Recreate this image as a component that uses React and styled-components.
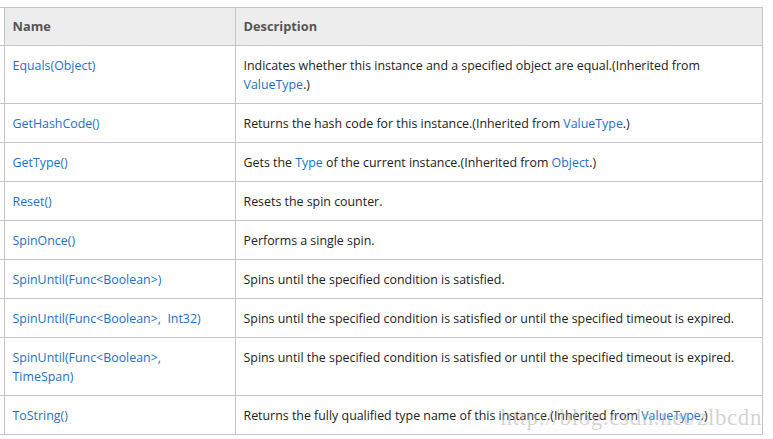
import React from "react";
import styled, { createGlobalStyle } from "styled-components";

const GlobalStyle = createGlobalStyle`
  body {
    margin: 0;
    background: #fff;
  }
`;

const rows = [
  {
    name: ["Equals(Object)"],
    desc: [
      ["Indicates whether this instance and a specified object are equal.(Inherited from"],
      [{ link: "ValueType" }, ".)"],
    ],
  },
  {
    name: ["GetHashCode()"],
    desc: [["Returns the hash code for this instance.(Inherited from ", { link: "ValueType" }, ".)"]],
  },
  {
    name: ["GetType()"],
    desc: [
      ["Gets the ", { link: "Type" }, " of the current instance.(Inherited from ", { link: "Object" }, ".)"],
    ],
  },
  { name: ["Reset()"], desc: [["Resets the spin counter."]] },
  { name: ["SpinOnce()"], desc: [["Performs a single spin."]] },
  {
    name: ["SpinUntil(Func<Boolean>)"],
    desc: [["Spins until the specified condition is satisfied."]],
  },
  {
    name: ["SpinUntil(Func<Boolean>,\u00a0 Int32)"],
    desc: [["Spins until the specified condition is satisfied or until the specified timeout is expired."]],
  },
  {
    name: ["SpinUntil(Func<Boolean>,", "TimeSpan)"],
    desc: [["Spins until the specified condition is satisfied or until the specified timeout is expired."]],
  },
  {
    name: ["ToString()"],
    desc: [
      ["Returns the fully qualified type name of this instance.(Inherited from ", { link: "ValueType" }, ".)"],
    ],
  },
];

export default function App() {
  return (
    <Page>
      <GlobalStyle />
      <Table>
        <colgroup>
          <col style={{ width: 4 }} />
          <col style={{ width: 231 }} />
          <col style={{ width: 527 }} />
        </colgroup>
        <thead>
          <tr>
            <Edge as="th" />
            <HeadCell>Name</HeadCell>
            <HeadCell>Description</HeadCell>
          </tr>
        </thead>
        <tbody>
          {rows.map((row, i) => (
            <tr key={i}>
              <Edge />
              <Cell>
                {row.name.map((line, j) => (
                  <Line key={j}>
                    <Link>{line}</Link>
                  </Line>
                ))}
              </Cell>
              <Cell>
                {row.desc.map((line, j) => (
                  <Line key={j}>
                    {line.map((part, k) =>
                      typeof part === "string" ? part : <Link key={k}>{part.link}</Link>
                    )}
                  </Line>
                ))}
              </Cell>
            </tr>
          ))}
        </tbody>
      </Table>
      <Watermark>http://blog.csdn.net/zlbcdn</Watermark>
    </Page>
  );
}

const Page = styled.div`
  position: relative;
  width: 773px;
  height: 439px;
  padding-top: 7px;
  box-sizing: border-box;
  overflow: hidden;
  font-family: "Open Sans", "Noto Sans", sans-serif;
  font-size: 12.4px;
`;

const Table = styled.table`
  border-collapse: collapse;
  table-layout: fixed;
  width: 762px;

  tr > * {
    border-top: 1px solid #c4c4c4;
    border-bottom: 1px solid #c4c4c4;
  }
`;

const Edge = styled.td`
  padding: 0;
  border-right: 1px solid #c4c4c4;
  background: #fff;
`;

const HeadCell = styled.th`
  background: #ededed;
  color: #555;
  font-weight: 700;
  font-size: 12.8px;
  text-align: left;
  padding: 9px 8px 9px;
  line-height: 19px;
  border-right: 1px solid #c4c4c4;
`;

const Cell = styled.td`
  vertical-align: top;
  color: #222;
  padding: 10px 8px 9px;
  line-height: 19px;
  border-right: 1px solid #c4c4c4;
`;

const Line = styled.div`
  white-space: nowrap;
`;

const Link = styled.span`
  color: #1e6fc8;
`;

const Watermark = styled.div`
  position: absolute;
  right: 11px;
  top: 405px;
  font-family: "Liberation Serif", serif;
  font-size: 23px;
  letter-spacing: 0.6px;
  color: rgba(175, 175, 175, 0.55);
  pointer-events: none;
`;
